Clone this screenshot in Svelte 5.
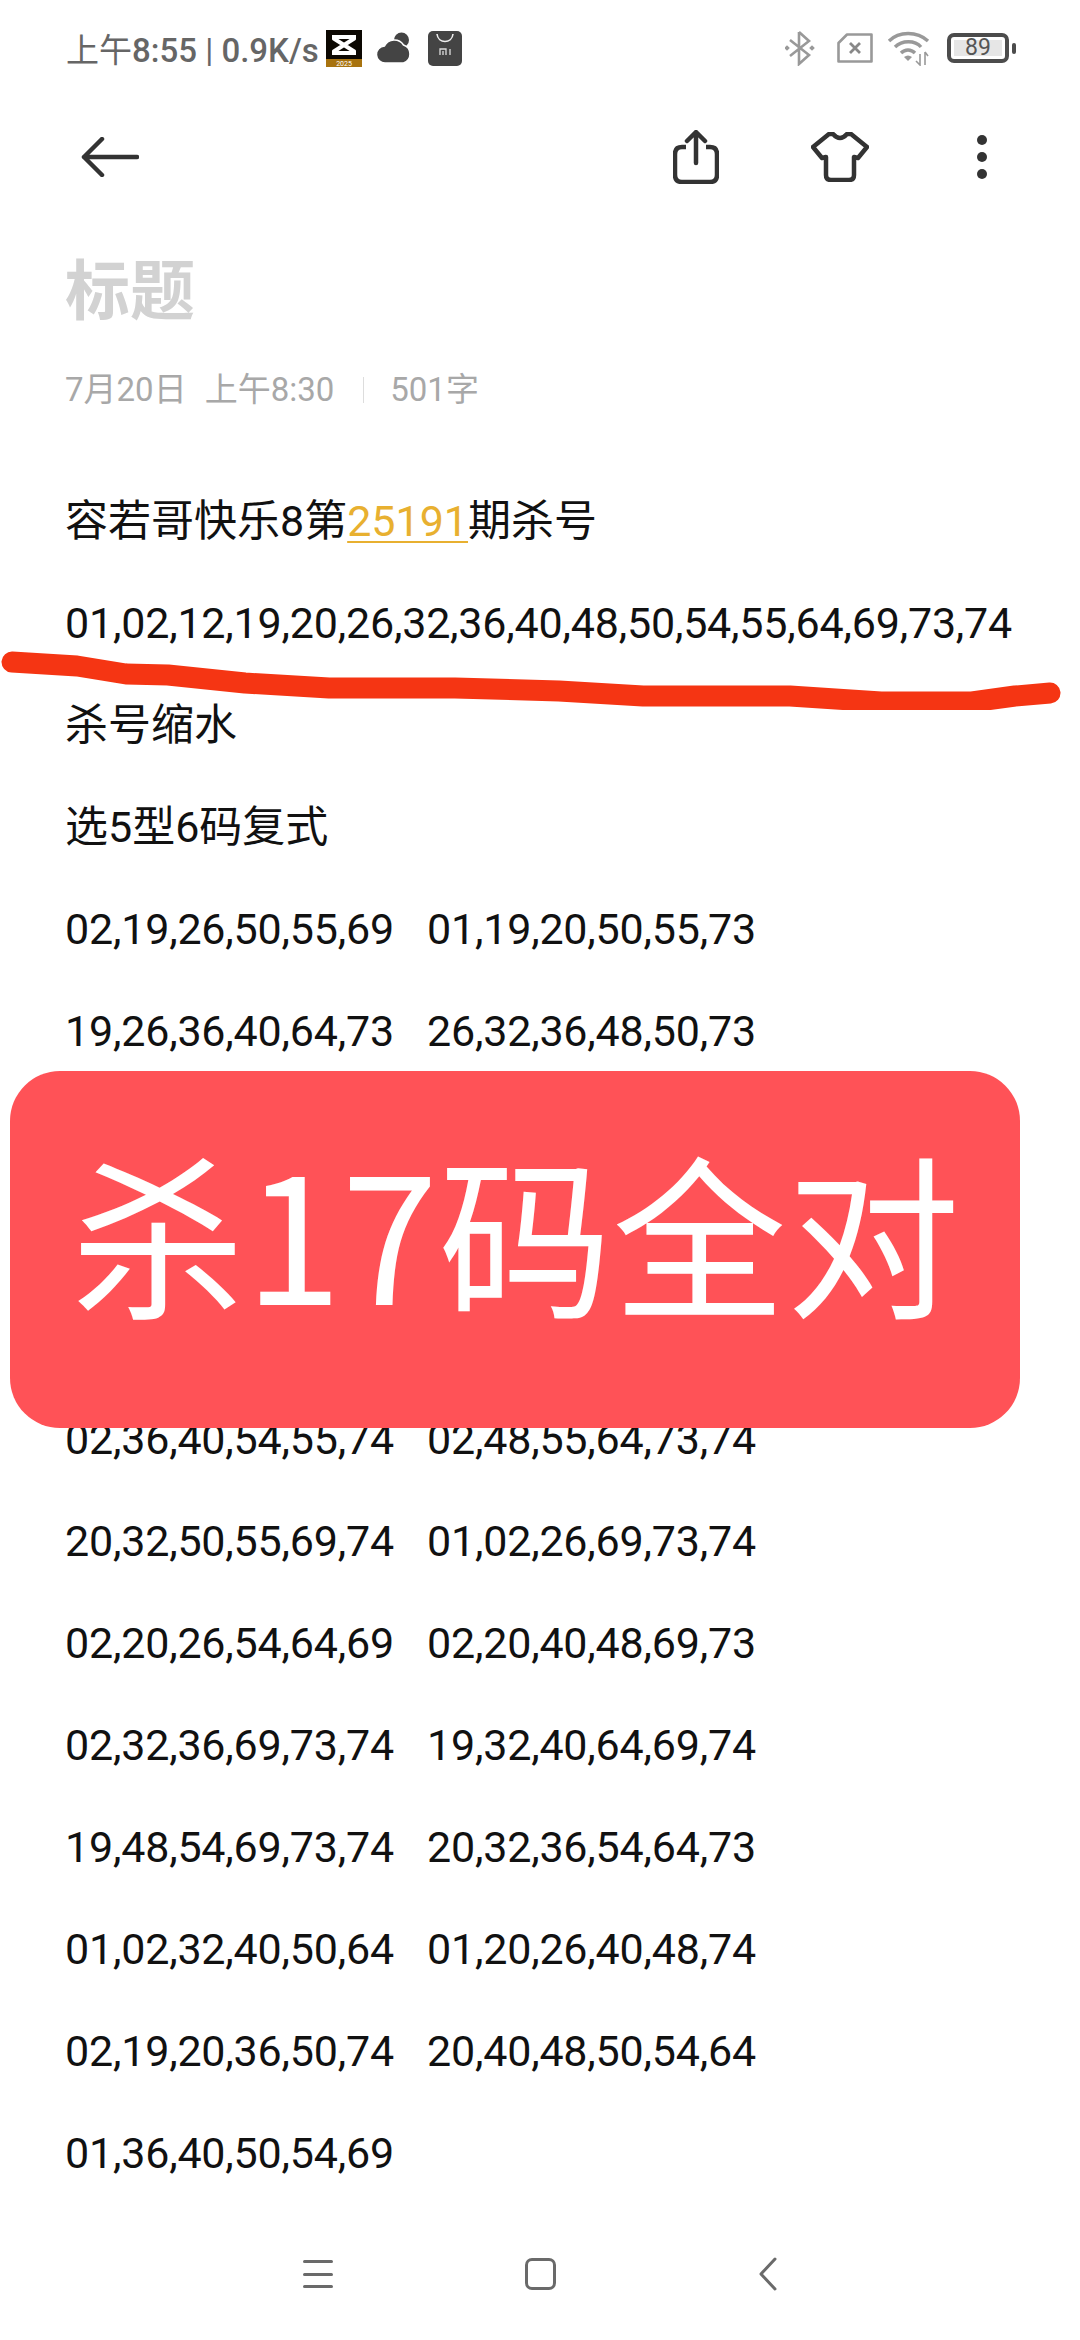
<script lang="ts">
  const killed = "01,02,12,19,20,26,32,36,40,48,50,54,55,64,69,73,74";

  // rows 3-5 sit behind the red banner, so they stay empty
  const rows = [
    ["02,19,26,50,55,69", "01,19,20,50,55,73"],
    ["19,26,36,40,64,73", "26,32,36,48,50,73"],
    [],
    [],
    [],
    ["02,36,40,54,55,74", "02,48,55,64,73,74"],
    ["20,32,50,55,69,74", "01,02,26,69,73,74"],
    ["02,20,26,54,64,69", "02,20,40,48,69,73"],
    ["02,32,36,69,73,74", "19,32,40,64,69,74"],
    ["19,48,54,69,73,74", "20,32,36,54,64,73"],
    ["01,02,32,40,50,64", "01,20,26,40,48,74"],
    ["02,19,20,36,50,74", "20,40,48,50,54,64"],
    ["01,36,40,50,54,69"],
  ];
</script>

<div class="page">
  <header class="status">
    <div class="status-left">
      <span class="clock"><span class="cjk">上午</span>8:55 <span class="pipe">|</span> 0.9K/s</span>
      <svg class="capcut" width="36" height="37" viewBox="0 0 36 37">
        <rect width="36" height="37" fill="#0c0802" />
        <rect y="29" width="36" height="8" fill="#a8730f" />
        <path d="M6 7 H30 M6 23 H30 M7 8 L29 22 M29 8 L7 22" stroke="#fff" stroke-width="4" fill="none" />
        <text x="18" y="36" text-anchor="middle" font-size="7" fill="#fff">2025</text>
      </svg>
      <svg class="cloud" width="37" height="32" viewBox="0 0 36 32">
        <circle cx="25" cy="8" r="7.5" fill="#444" />
        <path d="M9 31 a8.5 8.5 0 0 1 -1 -17 a11 11 0 0 1 19 -1 a9.5 9.5 0 0 1 0 18 z" fill="#444" stroke="#fff" stroke-width="1.5" />
      </svg>
      <svg class="mi" width="34" height="35" viewBox="0 0 34 35">
        <rect width="34" height="35" rx="5" fill="#444" />
        <path d="M9 3 C10 13 24 13 25 3" stroke="#eee" stroke-width="1.6" fill="none" />
        <path d="M12 24 V18 H18 V24 M15 20 V24 M22 18 V24" stroke="#ddd" stroke-width="1.3" fill="none" />
      </svg>
    </div>
    <div class="status-right">
      <svg class="bt" width="30" height="36" viewBox="0 0 30 36">
        <path d="M14 2 V34 L24 25 L5 10 M14 2 L24 11 L5 26" stroke="#999" stroke-width="2.6" fill="none" />
        <rect x="0" y="16" width="4" height="4" fill="#999" transform="rotate(45 2 18)" />
        <rect x="25" y="16" width="4" height="4" fill="#999" transform="rotate(45 27 18)" />
      </svg>
      <svg width="36" height="30" viewBox="0 0 36 30">
        <path d="M10 1.5 H34.5 V28.5 H1.5 V10 Z" stroke="#999" stroke-width="2.6" fill="none" stroke-linejoin="round" />
        <path d="M13 10 L23 20 M23 10 L13 20" stroke="#888" stroke-width="2.8" />
      </svg>
      <svg width="44" height="36" viewBox="0 0 44 36">
        <path d="M2 11 C12 1 30 1 41 11" stroke="#999" stroke-width="3.4" fill="none" />
        <path d="M8 17 C15 10 28 10 34 17" stroke="#999" stroke-width="3.4" fill="none" />
        <path d="M14 23 C18 19 24 19 28 23" stroke="#999" stroke-width="3.4" fill="none" />
        <path d="M21 31 L17 27 Q21 24 25 27 Z" fill="#999" />
        <path d="M33 24 V35 L29 31 M38 22 V35 M38 22 L41 26" stroke="#999" stroke-width="1.6" fill="none" />
      </svg>
      <div class="battery">
        <div class="battery-body"><span>89</span></div>
        <div class="battery-tip"></div>
      </div>
    </div>
  </header>

  <nav class="toolbar">
    <svg width="58" height="40" viewBox="0 0 58 40">
      <path d="M56 20 H3 M21 2 L3 20 L21 38" stroke="#333" stroke-width="4.5" fill="none" stroke-linecap="round" stroke-linejoin="round" />
    </svg>
    <div class="toolbar-right">
      <svg width="46" height="54" viewBox="0 0 46 54">
        <path d="M13 17 H9 Q2 17 2 24 V45 Q2 52 9 52 H37 Q44 52 44 45 V24 Q44 17 37 17 H33" stroke="#333" stroke-width="4.5" fill="none" />
        <path d="M23 33 V3 M14 11 L23 2 L32 11" stroke="#333" stroke-width="4.5" fill="none" stroke-linecap="round" stroke-linejoin="round" />
      </svg>
      <svg width="58" height="50" viewBox="0 0 58 50">
        <path d="M18 2 L22 2 Q29 10 36 2 L40 2 L56 15 L47 26 L43 25 V43 Q43 48 38 48 H20 Q15 48 15 43 V25 L11 26 L2 15 Z" stroke="#333" stroke-width="4.5" fill="none" stroke-linejoin="round" />
      </svg>
      <div class="dots"><i></i><i></i><i></i></div>
    </div>
  </nav>

  <main class="note">
    <h1>标题</h1>
    <div class="meta">
      <span>7月20日</span>
      <span>上午8:30</span>
      <span class="divider"></span>
      <span>501字</span>
    </div>

    <div class="body">
      <p>容若哥快乐8第<span class="issue">25191</span>期杀号</p>
      <p class="nums">{killed}</p>
      <p>杀号缩水</p>
      <p>选5型6码复式</p>
      {#each rows as row}
        <div class="row nums">
          {#each row as cell}
            <span>{cell}</span>
          {/each}
        </div>
      {/each}
    </div>
  </main>

  <footer class="navbar">
    <div class="menu"><i></i><i></i><i></i></div>
    <div class="home"></div>
    <svg width="18" height="34" viewBox="0 0 18 34">
      <path d="M16 2 L2 17 L16 32" stroke="#6a6a6a" stroke-width="3" fill="none" stroke-linecap="round" stroke-linejoin="round" />
    </svg>
  </footer>

  <!-- hand-drawn marker stroke and sticker pasted on top of the screenshot -->
  <svg class="stroke" width="1080" height="60" viewBox="0 650 1080 60">
    <path
      d="M12 662 L77 666 L126 674 L168 675 L245 683 L329 688 L455 688 L559 691 L643 696 L790 696 L881 702 L972 702 L1015 696 L1050 693"
      stroke="#f53513"
      stroke-width="21"
      fill="none"
      stroke-linecap="round"
      stroke-linejoin="round"
    />
  </svg>
  <div class="banner">杀17码全对</div>
</div>

<style>
  :global(body) {
    margin: 0;
    background: #fff;
  }

  .page {
    position: relative;
    width: 1080px;
    height: 2340px;
    overflow: hidden;
    display: flex;
    flex-direction: column;
    background: #fff;
    font-family: Roboto, "Noto Sans CJK SC", sans-serif;
    color: #111;
  }

  .status {
    height: 100px;
    flex: none;
    box-sizing: border-box;
    display: flex;
    align-items: center;
    justify-content: space-between;
    padding: 0 64px 4px 66px;
  }

  .status-left,
  .status-right {
    display: flex;
    align-items: center;
  }

  .status-left svg {
    display: block;
  }

  .clock {
    font-size: 33px;
    font-weight: 500;
    color: #666;
    white-space: nowrap;
  }

  .clock .cjk {
    font-weight: 400;
  }

  .pipe {
    font-weight: 400;
  }

  .capcut {
    margin-left: 7px;
  }

  .cloud {
    margin-left: 14px;
  }

  .mi {
    margin-left: 15px;
  }

  .status-right {
    gap: 14px;
  }

  .bt {
    margin-right: 8px;
  }

  .battery {
    display: flex;
    align-items: center;
    gap: 3px;
    margin-left: 2px;
  }

  .battery-body {
    width: 62px;
    height: 30px;
    box-sizing: border-box;
    border: 4px solid #4c4c4c;
    border-radius: 7px;
    padding: 3px;
    display: flex;
  }

  .battery-body span {
    flex: 1;
    background: #e6e6e6;
    color: #555;
    font-size: 23px;
    line-height: 16px;
    text-align: center;
  }

  .battery-tip {
    width: 4px;
    height: 11px;
    border-radius: 2px;
    background: #4c4c4c;
  }

  .toolbar {
    height: 114px;
    flex: none;
    display: flex;
    align-items: center;
    justify-content: space-between;
    padding: 0 93px 0 81px;
    box-sizing: border-box;
  }

  .toolbar-right {
    display: flex;
    align-items: center;
    gap: 92px;
  }

  .dots {
    display: flex;
    flex-direction: column;
    gap: 7px;
    margin-left: 16px;
  }

  .dots i {
    display: block;
    width: 10px;
    height: 10px;
    border-radius: 50%;
    background: #333;
  }

  .note {
    flex: 1;
    padding: 0 65px;
  }

  h1 {
    margin: 43px 0 0;
    font-size: 65px;
    line-height: 70px;
    font-weight: 700;
    color: #d2d2d2;
  }

  .meta {
    margin-top: 43px;
    display: flex;
    align-items: center;
    gap: 18px;
    font-size: 33px;
    line-height: 40px;
    color: #a8a8a8;
  }

  .divider {
    width: 1px;
    height: 26px;
    background: #ddd;
    margin: 0 8px 0 11px;
  }

  .body {
    margin-top: 60px;
    font-size: 43px;
    line-height: 102px;
  }

  .body p {
    margin: 0;
    height: 102px;
    white-space: nowrap;
  }

  .nums {
    letter-spacing: -0.2px;
  }

  .issue {
    color: #e8b030;
    text-decoration: underline;
    text-decoration-thickness: 2px;
    text-underline-offset: 5px;
  }

  .row {
    height: 102px;
    display: grid;
    grid-template-columns: 362px 1fr;
  }

  .navbar {
    height: 132px;
    flex: none;
    display: flex;
    align-items: center;
    padding: 0 303px;
    justify-content: space-between;
    box-sizing: border-box;
  }

  .menu {
    width: 30px;
    display: flex;
    flex-direction: column;
    gap: 9.5px;
  }

  .menu i {
    display: block;
    height: 3px;
    border-radius: 2px;
    background: #6a6a6a;
  }

  .home {
    width: 31px;
    height: 32px;
    box-sizing: border-box;
    border: 3px solid #6a6a6a;
    border-radius: 7px;
    margin-right: 12px;
  }

  .stroke {
    position: absolute;
    left: 0;
    top: 650px;
  }

  .banner {
    position: absolute;
    left: 10px;
    top: 1071px;
    width: 1010px;
    height: 357px;
    box-sizing: border-box;
    padding-left: 61px;
    border-radius: 50px;
    background: #ff5257;
    color: #fff;
    font-family: "Noto Sans CJK SC", Roboto, sans-serif;
    font-size: 174px;
    line-height: 316px;
    white-space: nowrap;
  }
</style>
